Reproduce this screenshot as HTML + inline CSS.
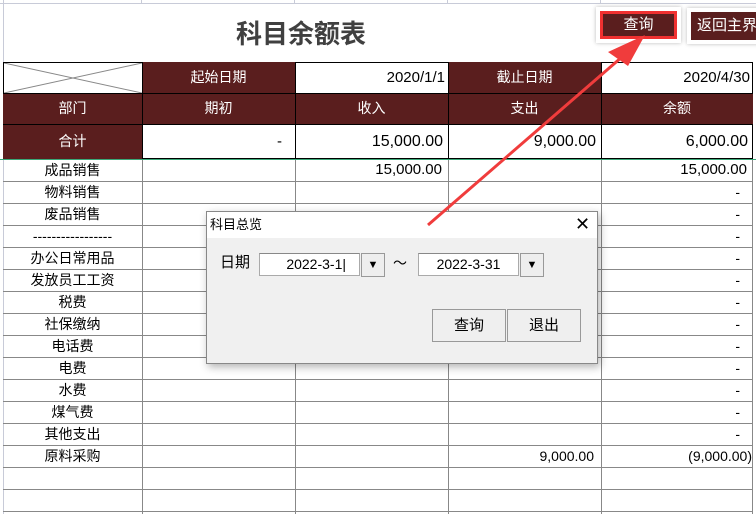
<!DOCTYPE html>
<html><head><meta charset="utf-8"><style>
body{margin:0;width:756px;height:514px;overflow:hidden;background:#fff;position:relative;font-family:"Liberation Sans","Noto Sans CJK SC",sans-serif;}
.a{position:absolute;box-sizing:border-box;}
.c{position:absolute;box-sizing:border-box;font-size:14px;line-height:22px;color:#000;white-space:nowrap;}
.dk{background:#5a1e1e;color:#fff;text-align:center;}
.hl{position:absolute;height:1px;background:#888;}
.vl{position:absolute;width:1px;background:#888;}
</style></head><body>
<div class="a" style="left:0;top:3px;width:756px;height:1px;background:#c8cbd8"></div>
<div class="a" style="left:3px;top:0;width:1px;height:514px;background:#c8cbd8"></div>
<div class="a" style="left:141px;top:0;width:1px;height:4px;background:#c8cbd8"></div>
<div class="a" style="left:294px;top:0;width:1px;height:4px;background:#c8cbd8"></div>
<div class="a" style="left:447px;top:0;width:1px;height:4px;background:#c8cbd8"></div>
<div class="a" style="left:600px;top:0;width:1px;height:4px;background:#c8cbd8"></div>
<div class="a" style="left:4px;top:4px;width:752px;height:58px;background:#fff"></div>
<div class="c" style="left:236px;top:17px;font-size:26px;line-height:34px;font-weight:bold;color:#404040">科目余额表</div>

<div class="a" style="left:596px;top:7px;width:85px;height:36px;background:#fff;box-shadow:0 0 4px #bbb"></div>
<div class="a dk" style="left:600px;top:11px;width:77px;height:28px;border:3px solid #f03030;font-size:15px;line-height:22px">查询</div>
<div class="a" style="left:687px;top:8px;width:75px;height:36px;background:#fff;box-shadow:0 0 4px #bbb"></div>
<div class="a dk" style="left:691px;top:12px;width:70px;height:28px;font-size:15px;line-height:28px;text-align:left;padding-left:6px">返回主界</div>

<div class="a" style="left:3px;top:62px;width:750px;height:97px;border:1px solid #000;background:#fff"></div>
<svg class="a" style="left:4px;top:63px" width="138" height="30"><line x1="0" y1="0" x2="138" y2="30" stroke="#888"/><line x1="0" y1="30" x2="138" y2="0" stroke="#888"/></svg>
<div class="a dk c" style="left:142px;top:62px;width:153px;height:31px;line-height:31px;color:#fff">起始日期</div>
<div class="c" style="left:295px;top:62px;width:152px;line-height:31px;text-align:right;padding-right:2px;font-size:15px">2020/1/1</div>
<div class="a dk c" style="left:448px;top:62px;width:153px;height:31px;line-height:31px;color:#fff">截止日期</div>
<div class="c" style="left:601px;top:62px;width:151px;line-height:31px;text-align:right;padding-right:2px;font-size:15px">2020/4/30</div>
<div class="a dk c" style="left:3px;top:93px;width:750px;height:31px;color:#fff"></div>
<div class="c" style="left:3px;top:93px;width:139px;line-height:31px;text-align:center;color:#fff">部门</div>
<div class="c" style="left:142px;top:93px;width:153px;line-height:31px;text-align:center;color:#fff">期初</div>
<div class="c" style="left:295px;top:93px;width:153px;line-height:31px;text-align:center;color:#fff">收入</div>
<div class="c" style="left:448px;top:93px;width:153px;line-height:31px;text-align:center;color:#fff">支出</div>
<div class="c" style="left:601px;top:93px;width:152px;line-height:31px;text-align:center;color:#fff">余额</div>
<div class="a dk c" style="left:3px;top:124px;width:139px;height:35px;line-height:35px;color:#fff">合计</div>
<div class="c" style="left:142px;top:124px;width:152px;line-height:35px;text-align:right;padding-right:12px;font-size:15px">-</div>
<div class="c" style="left:295px;top:124px;width:152px;line-height:35px;text-align:right;padding-right:4px;font-size:16px">15,000.00</div>
<div class="c" style="left:448px;top:124px;width:152px;line-height:35px;text-align:right;padding-right:4px;font-size:16px">9,000.00</div>
<div class="c" style="left:601px;top:124px;width:151px;line-height:35px;text-align:right;padding-right:4px;font-size:16px">6,000.00</div>
<div class="a" style="left:3px;top:93px;width:750px;height:1px;background:#000"></div>
<div class="a" style="left:3px;top:124px;width:750px;height:1px;background:#000"></div>
<div class="a" style="left:142px;top:62px;width:1px;height:97px;background:#000"></div>
<div class="a" style="left:295px;top:62px;width:1px;height:97px;background:#000"></div>
<div class="a" style="left:448px;top:62px;width:1px;height:97px;background:#000"></div>
<div class="a" style="left:601px;top:62px;width:1px;height:97px;background:#000"></div>
<div class="a" style="left:0;top:159px;width:756px;height:1px;background:#3aa878"></div>

<div class="vl" style="left:142px;top:160px;height:354px"></div>
<div class="vl" style="left:295px;top:160px;height:354px"></div>
<div class="vl" style="left:448px;top:160px;height:354px"></div>
<div class="vl" style="left:601px;top:160px;height:354px"></div>
<div class="vl" style="left:752px;top:160px;height:354px"></div>
<div class="hl" style="left:3px;top:181px;width:750px"></div>
<div class="hl" style="left:3px;top:203px;width:750px"></div>
<div class="hl" style="left:3px;top:225px;width:750px"></div>
<div class="hl" style="left:3px;top:247px;width:750px"></div>
<div class="hl" style="left:3px;top:269px;width:750px"></div>
<div class="hl" style="left:3px;top:291px;width:750px"></div>
<div class="hl" style="left:3px;top:313px;width:750px"></div>
<div class="hl" style="left:3px;top:335px;width:750px"></div>
<div class="hl" style="left:3px;top:357px;width:750px"></div>
<div class="hl" style="left:3px;top:379px;width:750px"></div>
<div class="hl" style="left:3px;top:401px;width:750px"></div>
<div class="hl" style="left:3px;top:423px;width:750px"></div>
<div class="hl" style="left:3px;top:445px;width:750px"></div>
<div class="hl" style="left:3px;top:467px;width:750px"></div>
<div class="hl" style="left:3px;top:489px;width:750px"></div>
<div class="hl" style="left:3px;top:511px;width:750px"></div>

<div class="c" style="left:3px;top:159px;width:139px;text-align:center">成品销售</div>
<div class="c" style="left:3px;top:181px;width:139px;text-align:center">物料销售</div>
<div class="c" style="left:3px;top:203px;width:139px;text-align:center">废品销售</div>
<div class="c" style="left:3px;top:225px;width:139px;text-align:center">-----------------</div>
<div class="c" style="left:3px;top:247px;width:139px;text-align:center">办公日常用品</div>
<div class="c" style="left:3px;top:269px;width:139px;text-align:center">发放员工工资</div>
<div class="c" style="left:3px;top:291px;width:139px;text-align:center">税费</div>
<div class="c" style="left:3px;top:313px;width:139px;text-align:center">社保缴纳</div>
<div class="c" style="left:3px;top:335px;width:139px;text-align:center">电话费</div>
<div class="c" style="left:3px;top:357px;width:139px;text-align:center">电费</div>
<div class="c" style="left:3px;top:379px;width:139px;text-align:center">水费</div>
<div class="c" style="left:3px;top:401px;width:139px;text-align:center">煤气费</div>
<div class="c" style="left:3px;top:423px;width:139px;text-align:center">其他支出</div>
<div class="c" style="left:3px;top:445px;width:139px;text-align:center">原料采购</div>

<div class="c" style="left:295px;top:159px;width:152px;text-align:right;padding-right:5px;font-size:15px">15,000.00</div>
<div class="c" style="left:601px;top:159px;width:151px;text-align:right;padding-right:5px;font-size:15px">15,000.00</div>
<div class="c" style="left:601px;top:181px;width:151px;text-align:right;padding-right:12px">-</div>
<div class="c" style="left:601px;top:203px;width:151px;text-align:right;padding-right:12px">-</div>
<div class="c" style="left:601px;top:225px;width:151px;text-align:right;padding-right:12px">-</div>
<div class="c" style="left:601px;top:247px;width:151px;text-align:right;padding-right:12px">-</div>
<div class="c" style="left:601px;top:269px;width:151px;text-align:right;padding-right:12px">-</div>
<div class="c" style="left:601px;top:291px;width:151px;text-align:right;padding-right:12px">-</div>
<div class="c" style="left:601px;top:313px;width:151px;text-align:right;padding-right:12px">-</div>
<div class="c" style="left:601px;top:335px;width:151px;text-align:right;padding-right:12px">-</div>
<div class="c" style="left:601px;top:357px;width:151px;text-align:right;padding-right:12px">-</div>
<div class="c" style="left:601px;top:379px;width:151px;text-align:right;padding-right:12px">-</div>
<div class="c" style="left:601px;top:401px;width:151px;text-align:right;padding-right:12px">-</div>
<div class="c" style="left:601px;top:423px;width:151px;text-align:right;padding-right:12px">-</div>
<div class="c" style="left:448px;top:445px;width:152px;text-align:right;padding-right:6px">9,000.00</div>
<div class="c" style="left:601px;top:445px;width:151px;text-align:right;padding-right:0">(9,000.00)</div>

<div class="a" style="left:206px;top:211px;width:392px;height:153px;background:#f0f0f0;border:1px solid #888;box-shadow:2px 3px 8px rgba(0,0,0,.3)">
 <div class="a" style="left:0;top:0;width:390px;height:26px;background:#fff"></div>
 <div class="c" style="left:3px;top:2px;font-size:13px">科目总览</div>
 <div class="c" style="left:368px;top:1px;font-size:18px">✕</div>
 <div class="c" style="left:13px;top:40px;font-size:15px">日期</div>
 <div class="a" style="left:52px;top:41px;width:101px;height:23px;background:#fff;border:1px solid #aaa;border-top-color:#888"></div>
 <div class="c" style="left:52px;top:41px;width:101px;text-align:right;padding-right:14px;font-size:14px">2022-3-1|</div>
 <div class="a" style="left:154px;top:41px;width:24px;height:24px;border:1px solid #999;background:#eee;font-size:11px;text-align:center;line-height:22px">▼</div>
 <div class="c" style="left:186px;top:40px;font-size:14px">～</div>
 <div class="a" style="left:211px;top:41px;width:101px;height:23px;background:#fff;border:1px solid #aaa;border-top-color:#888"></div>
 <div class="c" style="left:211px;top:41px;width:101px;text-align:center;font-size:14px">2022-3-31</div>
 <div class="a" style="left:313px;top:41px;width:24px;height:24px;border:1px solid #999;background:#eee;font-size:11px;text-align:center;line-height:22px">▼</div>
 <div class="a" style="left:225px;top:97px;width:74px;height:33px;border:1px solid #999;background:#efefef;font-size:15px;text-align:center;line-height:31px">查询</div>
 <div class="a" style="left:300px;top:97px;width:74px;height:33px;border:1px solid #999;background:#efefef;font-size:15px;text-align:center;line-height:31px">退出</div>
</div>

<svg class="a" style="left:0;top:0" width="756" height="514"><line x1="428" y1="225" x2="630" y2="50" stroke="#f03c3c" stroke-width="3"/><polygon points="645,35 608,52 628,66" fill="#f03c3c"/></svg>
</body></html>
